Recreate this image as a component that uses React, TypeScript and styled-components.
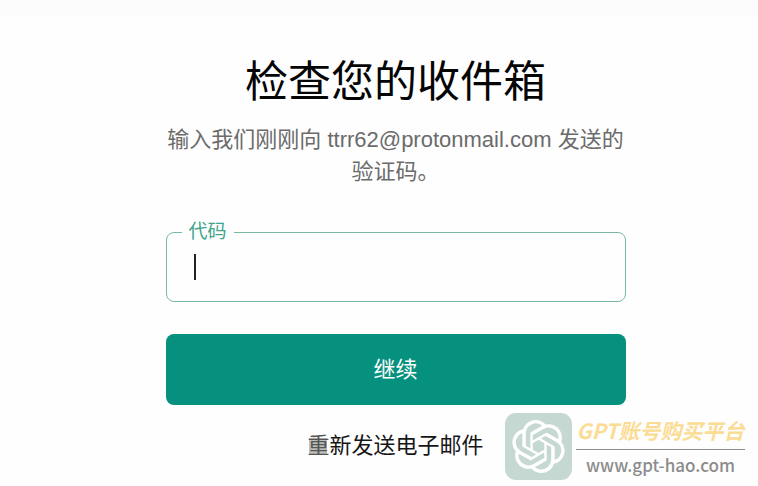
import React, { useState } from "react";
import styled, { createGlobalStyle } from "styled-components";
import { SiOpenai } from "react-icons/si";

const GlobalStyle = createGlobalStyle`
  *, *::before, *::after { box-sizing: border-box; }
  body {
    margin: 0;
    background: #fefefe;
    font-family: "Liberation Sans", "Noto Sans CJK SC", sans-serif;
  }
`;

const Page = styled.main`
  position: relative;
  display: flex;
  justify-content: center;
  min-height: 100vh;
  padding: 50px 16px 16px 49px;
  background: linear-gradient(#fcfcfc 16px, #fefefe 16px);
`;

const Form = styled.form`
  display: flex;
  flex-direction: column;
  align-items: center;
  width: 100%;
  max-width: 460px;
`;

const Title = styled.h1`
  margin: 0;
  font-size: 43px;
  font-weight: 400;
  line-height: 64px;
  color: #050505;
`;

const Hint = styled.p`
  margin: 10px 0 44px;
  font-size: 22px;
  line-height: 32px;
  text-align: center;
  color: #6b6b6b;
`;

const Field = styled.div`
  position: relative;
  width: 100%;
`;

const Label = styled.label`
  position: absolute;
  top: -12px;
  left: 16px;
  padding: 0 7px;
  font-size: 19px;
  line-height: 24px;
  color: #3fa58c;
  background: #fefefe;
`;

const CodeInput = styled.input`
  display: block;
  width: 100%;
  height: 70px;
  padding: 0 28px;
  border: 1px solid #78b9a6;
  border-radius: 8px;
  outline: none;
  background: transparent;
  font: inherit;
  font-size: 22px;
  color: #111;
  caret-color: transparent;

  &:not(:placeholder-shown) { caret-color: #111; }
`;

const Caret = styled.span`
  position: absolute;
  top: 22px;
  left: 28px;
  width: 2px;
  height: 26px;
  background: #222;
  pointer-events: none;
`;

const Submit = styled.button`
  width: 100%;
  height: 71px;
  margin-top: 32px;
  padding: 0 16px 6px;
  border: 0;
  border-radius: 8px;
  background: #06917e;
  color: #fff;
  font: inherit;
  font-size: 22px;
  cursor: pointer;
`;

const Resend = styled.button`
  margin-top: 24px;
  padding: 0;
  border: 0;
  background: none;
  color: #161616;
  font: inherit;
  font-size: 22px;
  line-height: 34px;
  cursor: pointer;
`;

const Faded = styled.span`
  color: #555;
  background: linear-gradient(#bdbdbd, #bdbdbd) center / 18px 16px no-repeat;
`;

const Brand = styled.aside`
  position: absolute;
  right: 13px;
  bottom: 6px;
  display: flex;
  align-items: center;
  gap: 4px;
`;

const BrandTile = styled.div`
  display: grid;
  place-items: center;
  width: 67px;
  height: 67px;
  border-radius: 11px;
  background: #c6d8d2;
  color: #fff;
`;

const BrandText = styled.div`
  display: flex;
  flex-direction: column;
  align-items: center;
  width: 169px;
`;

const BrandName = styled.span`
  width: 100%;
  padding-bottom: 3px;
  border-bottom: 1px solid #8c8c8c;
  font-family: "Noto Sans CJK SC", sans-serif;
  font-size: 21px;
  font-style: italic;
  font-weight: 700;
  line-height: 32px;
  text-align: center;
  white-space: nowrap;
  color: #fbdc94;
`;

const BrandLink = styled.a`
  font-family: "Noto Sans CJK SC", sans-serif;
  font-size: 17px;
  font-weight: 500;
  line-height: 29px;
  color: #8c8c8c;
  text-decoration: none;
`;

export default function App() {
  const [code, setCode] = useState("");

  return (
    <>
      <GlobalStyle />
      <Page>
        <Form onSubmit={(event) => event.preventDefault()}>
          <Title>检查您的收件箱</Title>
          <Hint>输入我们刚刚向 ttrr62@protonmail.com 发送的验证码。</Hint>
          <Field>
            <CodeInput
              id="code"
              placeholder=" "
              autoComplete="one-time-code"
              value={code}
              onChange={(event) => setCode(event.target.value)}
            />
            <Label htmlFor="code">代码</Label>
            {code === "" && <Caret aria-hidden="true" />}
          </Field>
          <Submit type="submit">继续</Submit>
          <Resend type="button">
            <Faded>重</Faded>新发送电子邮件
          </Resend>
        </Form>
        <Brand>
          <BrandTile>
            <SiOpenai size={53} aria-hidden="true" />
          </BrandTile>
          <BrandText>
            <BrandName>GPT账号购买平台</BrandName>
            <BrandLink href="#">www.gpt-hao.com</BrandLink>
          </BrandText>
        </Brand>
      </Page>
    </>
  );
}
